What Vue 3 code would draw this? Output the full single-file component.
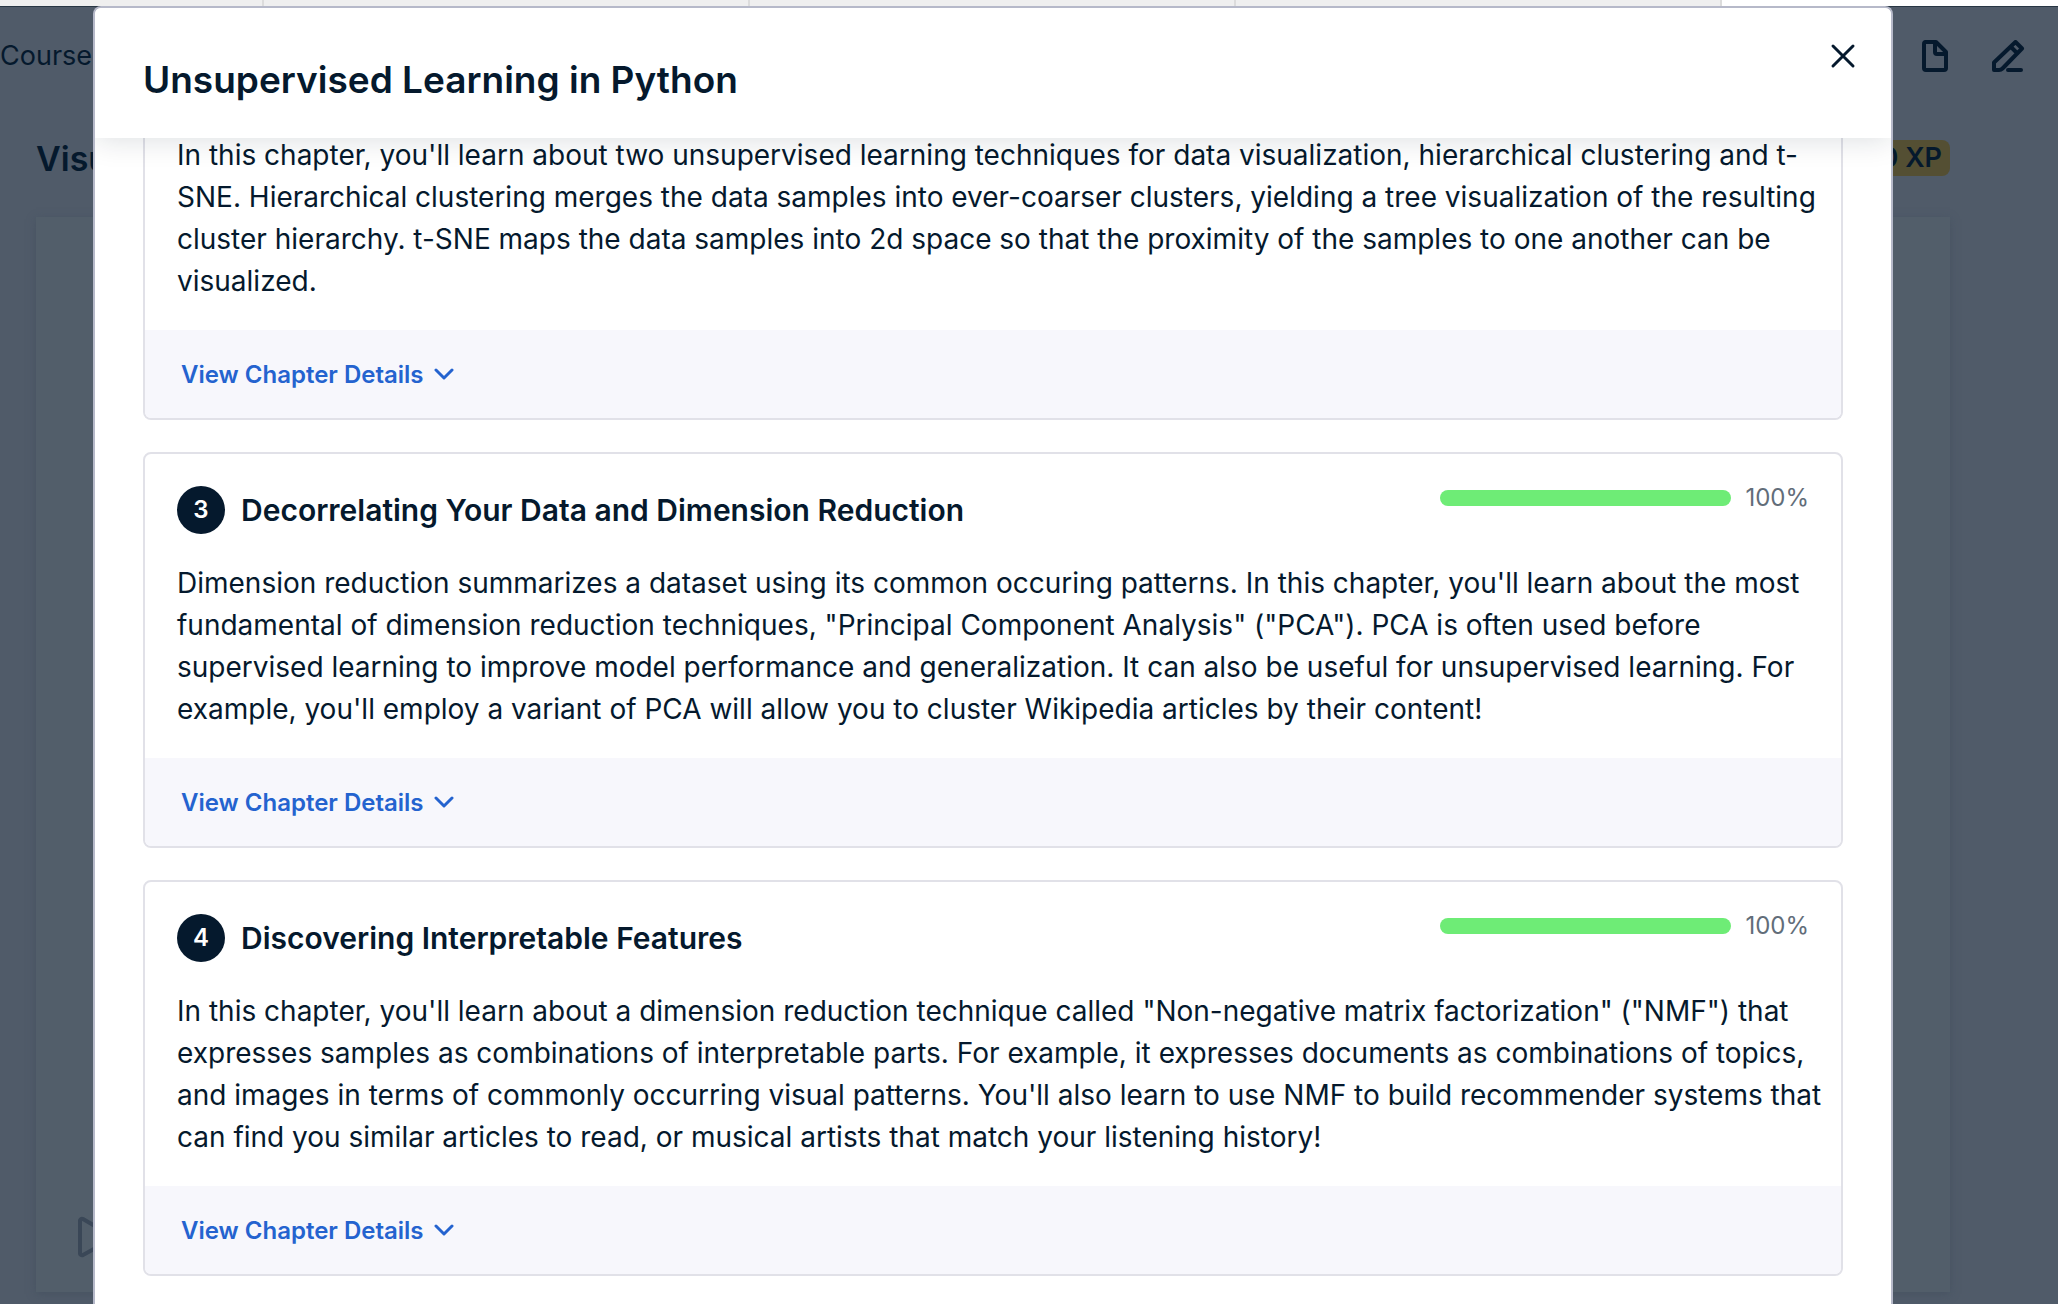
<script setup>
const chapters = [
  {
    text: [
      "In this chapter, you'll learn about two unsupervised learning techniques for data visualization, hierarchical clustering and t-",
      'SNE. Hierarchical clustering merges the data samples into ever-coarser clusters, yielding a tree visualization of the resulting',
      'cluster hierarchy. t-SNE maps the data samples into 2d space so that the proximity of the samples to one another can be',
      'visualized.',
    ],
  },
  {
    number: 3,
    title: 'Decorrelating Your Data and Dimension Reduction',
    progress: 100,
    text: [
      "Dimension reduction summarizes a dataset using its common occuring patterns. In this chapter, you'll learn about the most",
      'fundamental of dimension reduction techniques, "Principal Component Analysis" ("PCA"). PCA is often used before',
      'supervised learning to improve model performance and generalization. It can also be useful for unsupervised learning. For',
      "example, you'll employ a variant of PCA will allow you to cluster Wikipedia articles by their content!",
    ],
  },
  {
    number: 4,
    title: 'Discovering Interpretable Features',
    progress: 100,
    text: [
      'In this chapter, you\'ll learn about a dimension reduction technique called "Non-negative matrix factorization" ("NMF") that',
      'expresses samples as combinations of interpretable parts. For example, it expresses documents as combinations of topics,',
      "and images in terms of commonly occurring visual patterns. You'll also learn to use NMF to build recommender systems that",
      'can find you similar articles to read, or musical artists that match your listening history!',
    ],
  },
]
</script>

<template>
  <div class="page">
    <div class="tabs"><span></span><span></span><span></span><span></span><span></span></div>

    <div class="app">
      <header class="topbar">
        <a href="#" class="crumb">Course</a>
        <nav class="tools">
          <button type="button" aria-label="Slides">
            <svg width="32" height="32" viewBox="0 0 32 32">
              <path d="M5 2H16L26 12V28a2 2 0 0 1-2 2H6a2 2 0 0 1-2-2V4a2 2 0 0 1 2-2M15 2V12a2 2 0 0 0 2 2H26" />
            </svg>
          </button>
          <button type="button" aria-label="Notes">
            <svg width="36" height="32" viewBox="0 0 36 32">
              <path d="M4 30V22.500L25.500 2 32 8.500 12.500 28.500Q11 30 9 30ZM21 7l6 6M18 30H31" />
            </svg>
          </button>
        </nav>
      </header>
      <main class="lesson">
        <div class="lesson-head">
          <h2>Visu</h2>
          <span class="xp">50 XP</span>
        </div>
        <div class="player">
          <svg width="44" height="44" viewBox="0 0 44 44"><path d="M4 5a2 2 0 0 1 3-2L36 20a2 2 0 0 1 0 3L7 39a2 2 0 0 1-3-2Z" /></svg>
        </div>
      </main>

      <div class="overlay">
        <section class="modal" role="dialog" aria-labelledby="modal-title">
          <header class="modal-head">
            <h1 id="modal-title">Unsupervised Learning in Python</h1>
            <button type="button" class="close" aria-label="Close">
              <svg width="28" height="28" viewBox="0 0 28 28"><path d="M4 4 24 24M24 4 4 24" /></svg>
            </button>
          </header>
          <div class="modal-body">
            <article v-for="(c, i) in chapters" :key="i" class="card" :class="{ cut: !c.title }">
              <div class="card-main">
                <div v-if="c.title" class="card-head">
                  <span class="num">{{ c.number }}</span>
                  <h3>{{ c.title }}</h3>
                  <div class="progress">
                    <div class="track"><div class="fill" :style="{ width: c.progress + '%' }"></div></div>
                    <span>{{ c.progress }}%</span>
                  </div>
                </div>
                <p>{{ c.text.join('\n') }}</p>
              </div>
              <footer class="card-foot">
                <button type="button" class="details">
                  View Chapter Details
                  <svg width="20" height="12" viewBox="0 0 20 12"><path d="M2 2l8 8 8-8" /></svg>
                </button>
              </footer>
            </article>
          </div>
        </section>
      </div>
    </div>
  </div>
</template>

<style>
body {
  background: #505b69;
  overflow: hidden;
}
</style>

<style scoped>
* {
  box-sizing: border-box;
}
.page {
  display: flex;
  flex-direction: column;
  height: 100vh;
  color: #05192d;
  font-family: Inter, "Liberation Sans", sans-serif;
  font-size: 28px;
}
h1, h2, h3, p {
  margin: 0;
}
button {
  padding: 0;
  border: 0;
  background: none;
  color: inherit;
  font: inherit;
  cursor: pointer;
}
svg {
  display: block;
  fill: none;
  stroke: currentColor;
  stroke-width: 4;
  stroke-linecap: round;
  stroke-linejoin: round;
}
.tabs {
  display: flex;
  flex: none;
  height: 6px;
  background: #efefef;
}
.tabs span {
  width: 486px;
  border-right: 2px solid #dcdcdc;
}
.tabs span:first-child {
  width: 264px;
}
.tabs span:last-child {
  flex: 1;
  border: 0;
  background: #fff;
}
.app {
  position: relative;
  display: flex;
  flex: 1;
  flex-direction: column;
  min-height: 0;
  border-top: 1px solid #283644;
  background: #505b69;
}
.topbar {
  display: flex;
  align-items: center;
  justify-content: space-between;
  height: 97px;
  padding-right: 32px;
}
.crumb {
  color: inherit;
  font-size: 27px;
  text-decoration: none;
}
.tools {
  display: flex;
  gap: 38px;
}
.lesson {
  display: flex;
  flex: 1;
  flex-direction: column;
  padding: 36px 108px 12px 36px;
}
.lesson-head {
  display: flex;
  align-items: center;
  justify-content: space-between;
  height: 36px;
  margin-bottom: 41px;
}
.lesson-head h2 {
  font-size: 34px;
  font-weight: 600;
}
.xp {
  padding: 0 8px;
  border-radius: 8px;
  background: #544f33;
  font-size: 27px;
  font-weight: 600;
  line-height: 36px;
}
.player {
  display: flex;
  flex: 1;
  align-items: flex-end;
  padding: 32px 40px;
  background: #525e6a;
  box-shadow: 0 2px 8px #475362;
  color: #3a4757;
}
.overlay {
  position: absolute;
  inset: -1px 0 0;
  display: flex;
  padding: 0 165px 0 93px;
}
.modal {
  display: flex;
  flex: 1;
  flex-direction: column;
  overflow: hidden;
  border: 2px solid #b6b9c9;
  border-bottom: 0;
  border-radius: 8px 8px 0 0;
  background: #fff;
}
.modal-head {
  z-index: 1;
  display: flex;
  flex: none;
  align-items: flex-start;
  justify-content: space-between;
  height: 130px;
  padding: 34px 34px 0 48px;
  background: #fff;
  box-shadow: 0 2px 28px rgba(5, 25, 45, 0.14);
}
.modal-head h1 {
  font-size: 37px;
  font-weight: 600;
  line-height: 76px;
}
.close svg,
.details svg {
  stroke-width: 3;
}
.modal-body {
  display: flex;
  flex: 1;
  flex-direction: column;
  gap: 32px;
  min-height: 0;
  margin-top: -4px;
  padding: 0 48px;
  overflow: hidden;
}
.card {
  flex: none;
  overflow: hidden;
  border: 2px solid #e1e1e8;
  border-radius: 8px;
}
.card-main {
  padding: 32px 32px 28px;
}
.cut {
  border-top: 0;
  border-radius: 0 0 8px 8px;
}
.cut .card-main {
  padding-top: 0;
}
.card-head {
  display: flex;
  align-items: center;
  gap: 16px;
  margin-bottom: 28px;
}
.num {
  width: 48px;
  border-radius: 50%;
  background: #05192d;
  color: #fff;
  font-size: 24px;
  font-weight: 600;
  line-height: 48px;
  text-align: center;
}
.card-head h3 {
  flex: 1;
  font-size: 30px;
  font-weight: 600;
  line-height: 48px;
}
.progress {
  display: flex;
  align-self: flex-start;
  align-items: center;
  gap: 14px;
  color: #626d79;
  font-size: 24px;
  line-height: 24px;
}
.track {
  width: 291px;
  height: 16px;
  overflow: hidden;
  border-radius: 8px;
  background: #e1e1e8;
}
.fill {
  height: 100%;
  background: #6eec76;
}
.card p {
  line-height: 42px;
  white-space: pre;
}
.card-foot {
  display: flex;
  align-items: center;
  height: 88px;
  padding: 0 36px;
  background: #f7f7fc;
}
.details {
  display: flex;
  align-items: center;
  gap: 10px;
  color: #2463cf;
  font-size: 24px;
  font-weight: 600;
}
</style>
